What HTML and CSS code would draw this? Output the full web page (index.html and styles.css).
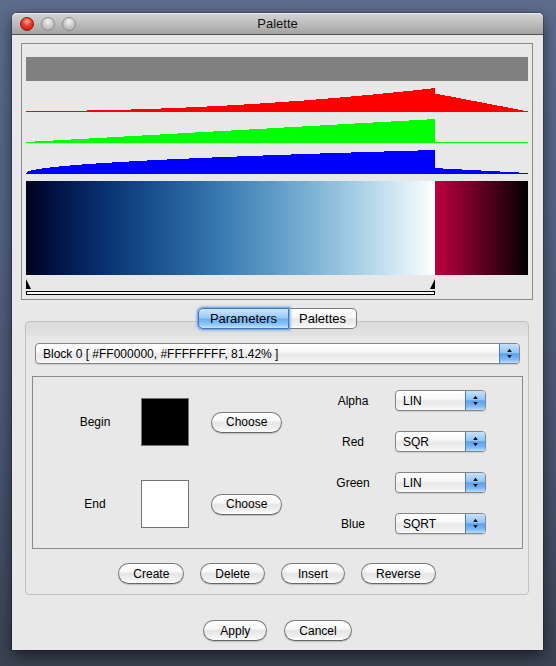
FILE: index.html
```html
<!DOCTYPE html>
<html lang="en">
<head>
<meta charset="utf-8">
<title>Palette</title>
<link rel="stylesheet" href="styles.css">
</head>
<body>
<div class="window">
  <div class="titlebar">
    <div class="lights">
      <span class="light light-close"></span>
      <span class="light"></span>
      <span class="light"></span>
    </div>
    <div class="title">Palette</div>
    <div></div>
  </div>
  <div class="content">
    <div class="preview">
      <div class="alpha-bar"></div>
      <svg class="hist" width="502" height="24" viewBox="0 0 502 24" shape-rendering="crispEdges"><path fill="#ff0000" d="M0 24 V23 H61 V22 H105 V21 H135 V20 H160 V19 H181 V18 H201 V17 H218 V16 H234 V15 H249 V14 H263 V13 H278 V12 H290 V11 H302 V10 H314 V9 H325 V8 H336 V7 H347 V6 H357 V5 H367 V4 H377 V3 H387 V2 H396 V1 H405 V0 H409 V6 H414 V7 H419 V8 H425 V9 H430 V10 H435 V11 H440 V12 H445 V13 H451 V14 H456 V15 H461 V16 H466 V17 H471 V18 H477 V19 H482 V20 H487 V21 H492 V22 H497 V23 H502 V24 Z"/></svg>
      <svg class="hist" width="502" height="24" viewBox="0 0 502 24" shape-rendering="crispEdges"><path fill="#00ff00" d="M0 24 V23 H9 V22 H27 V21 H45 V20 H63 V19 H81 V18 H98 V17 H116 V16 H134 V15 H152 V14 H169 V13 H187 V12 H205 V11 H223 V10 H241 V9 H258 V8 H276 V7 H294 V6 H312 V5 H329 V4 H347 V3 H365 V2 H383 V1 H401 V0 H409 V23 H502 V24 Z"/></svg>
      <svg class="hist" width="502" height="24" viewBox="0 0 502 24" shape-rendering="crispEdges"><path fill="#0000ff" d="M0 24 V23 H1 V22 H2 V21 H5 V20 H10 V19 H16 V18 H24 V17 H33 V16 H44 V15 H56 V14 H70 V13 H86 V12 H103 V11 H121 V10 H141 V9 H163 V8 H186 V7 H211 V6 H237 V5 H265 V4 H294 V3 H325 V2 H358 V1 H392 V0 H409 V18 H417 V19 H436 V20 H455 V21 H474 V22 H493 V23 H502 V24 Z"/></svg>
      <div class="gradient">
        <div class="grad-a"></div>
        <div class="grad-b"></div>
      </div>
      <div class="markers">
        <div class="tri-row">
          <svg width="5" height="10" viewBox="0 0 5 10"><polygon points="0,0 0,10 5,10" fill="#000"/></svg>
          <svg width="5" height="10" viewBox="0 0 5 10"><polygon points="5,0 5,10 0,10" fill="#000"/></svg>
        </div>
        <div class="range"></div>
      </div>
    </div>

    <div class="tabs">
      <button class="tab tab-active">Parameters</button>
      <button class="tab tab-last">Palettes</button>
    </div>

    <div class="pane">
      <div class="select select-wide">
        <span class="select-text">Block 0 [ #FF000000, #FFFFFFFF, 81.42% ]</span>
        <span class="stepper"><svg width="20" height="19" viewBox="0 0 20 19"><polygon points="7.5,8 12.5,8 10,4.5" fill="#111"/><polygon points="7.5,11 12.5,11 10,14.5" fill="#111"/></svg></span>
      </div>

      <div class="block-box">
        <div class="colors">
          <div class="lbl-left">Begin</div>
          <div class="swatch swatch-black"></div>
          <div><button class="btn">Choose</button></div>
          <div class="lbl-left">End</div>
          <div class="swatch swatch-white"></div>
          <div><button class="btn">Choose</button></div>
        </div>
        <div class="channels">
          <div class="lbl-right">Alpha</div>
          <div class="select select-small"><span class="select-text">LIN</span><span class="stepper"><svg width="20" height="19" viewBox="0 0 20 19"><polygon points="7.5,8 12.5,8 10,4.5" fill="#111"/><polygon points="7.5,11 12.5,11 10,14.5" fill="#111"/></svg></span></div>
          <div class="lbl-right">Red</div>
          <div class="select select-small"><span class="select-text">SQR</span><span class="stepper"><svg width="20" height="19" viewBox="0 0 20 19"><polygon points="7.5,8 12.5,8 10,4.5" fill="#111"/><polygon points="7.5,11 12.5,11 10,14.5" fill="#111"/></svg></span></div>
          <div class="lbl-right">Green</div>
          <div class="select select-small"><span class="select-text">LIN</span><span class="stepper"><svg width="20" height="19" viewBox="0 0 20 19"><polygon points="7.5,8 12.5,8 10,4.5" fill="#111"/><polygon points="7.5,11 12.5,11 10,14.5" fill="#111"/></svg></span></div>
          <div class="lbl-right">Blue</div>
          <div class="select select-small"><span class="select-text">SQRT</span><span class="stepper"><svg width="20" height="19" viewBox="0 0 20 19"><polygon points="7.5,8 12.5,8 10,4.5" fill="#111"/><polygon points="7.5,11 12.5,11 10,14.5" fill="#111"/></svg></span></div>
        </div>
      </div>

      <div class="btn-row">
        <button class="btn">Create</button>
        <button class="btn">Delete</button>
        <button class="btn">Insert</button>
        <button class="btn">Reverse</button>
      </div>
    </div>

    <div class="dialog-row">
      <button class="btn">Apply</button>
      <button class="btn">Cancel</button>
    </div>
  </div>
</div>
</body>
</html>
```

FILE: styles.css
```css
* { box-sizing: border-box; }

html, body {
  margin: 0;
  width: 556px;
  height: 666px;
  overflow: hidden;
}

body {
  padding: 13px 0 0 12px;
  background: linear-gradient(180deg, #5c6c8b 0%, #546282 35%, #485470 70%, #3b4352 100%);
  font-family: "Liberation Sans", Arial, sans-serif;
  color: #000;
}

.window {
  width: 531px;
  height: 637px;
  background: #e8e8e8;
  border-radius: 5px 5px 0 0;
  box-shadow: 0 6px 16px rgba(0, 0, 0, 0.55), 0 0 0 1px rgba(0, 0, 0, 0.2);
  display: flex;
  flex-direction: column;
}

.titlebar {
  height: 22px;
  flex: none;
  border-bottom: 1px solid #555;
  border-radius: 5px 5px 0 0;
  background: linear-gradient(180deg, #d4d4d4 0%, #bdbdbd 50%, #a3a3a3 100%);
  box-shadow: inset 0 1px 0 #ececec;
  display: grid;
  grid-template-columns: 1fr auto 1fr;
  align-items: center;
}

.lights {
  display: flex;
  gap: 7px;
  padding-left: 8px;
}

.light {
  width: 14px;
  height: 14px;
  border-radius: 50%;
  border: 1px solid #8b8b8b;
  background: radial-gradient(circle at 50% 30%, #f4f4f4 0%, #cdcdcd 45%, #a8a8a8 100%);
}

.light-close {
  border-color: #8c1d12;
  background: radial-gradient(circle at 50% 30%, #ffb8a8 0%, #f2402e 40%, #b40f02 100%);
}

.title {
  font-size: 13px;
  color: #111;
}

.content {
  flex: 1;
  padding-top: 8px;
  display: flex;
  flex-direction: column;
}

/* preview panel */
.preview {
  margin: 0 10px 0 9px;
  border: 1px solid #8a8a8a;
  padding: 13px 4px 4px;
}

.alpha-bar {
  height: 24px;
  background: #808080;
}

.hist {
  display: block;
  margin-top: 7px;
}

.gradient {
  display: flex;
  height: 94px;
  margin-top: 7px;
}

.grad-a {
  width: 409px;
  background: linear-gradient(to right,
    #00041c 0%, #010d39 5%, #031a51 10%, #0a3372 20%, #174d8c 30%,
    #2966a1 40%, #4080b4 50%, #5c99c6 60%, #7db3d5 70%, #a3cce4 80%,
    #cfe6f2 90%, #ffffff 100%);
}

.grad-b {
  flex: 1;
  background: linear-gradient(to right, #bd0040 0%, #000000 100%);
}

.markers {
  width: 409px;
  height: 20px;
  padding-top: 4px;
}

.tri-row {
  display: flex;
  justify-content: space-between;
  height: 10px;
}

.tri-row svg { display: block; }

.range {
  margin-top: 2px;
  height: 4px;
  border: 1px solid #000;
  background: #fff;
}

/* tabs */
.tabs {
  position: relative;
  z-index: 1;
  display: flex;
  justify-content: center;
  align-items: flex-start;
  height: 22px;
  margin-top: 7px;
  padding-top: 1px;
}

.tab {
  height: 21px;
  padding: 0;
  font-family: "Liberation Sans", Arial, sans-serif;
  font-size: 13px;
  color: #000;
  border: 1px solid #7a7a7a;
  background: linear-gradient(180deg, #ffffff 0%, #f6f6f6 45%, #e7e7e7 55%, #f2f2f2 85%, #ffffff 100%);
}

.tab-active {
  position: relative;
  z-index: 1;
  width: 91px;
  border-color: #4a76b2;
  border-radius: 5px 0 0 5px;
  background: linear-gradient(180deg, #cbe5fd 0%, #9ccbf7 45%, #6eb0f0 55%, #8bc4f6 80%, #c0e4ff 100%);
  box-shadow: 0 0 0 1px rgba(110, 165, 235, 0.8), 0 0 2px 2px rgba(110, 165, 235, 0.55);
}

.tab-last {
  width: 68px;
  border-left: none;
  border-radius: 0 5px 5px 0;
}

/* tab pane */
.pane {
  margin: -8px 14px 0 13px;
  height: 274px;
  border: 1px solid #c2c2c2;
  border-radius: 4px;
  padding-top: 21px;
  background: linear-gradient(180deg, #dcdcdc 0px, #e2e2e2 14px, #e8e8e8 15px);
}

.select {
  display: flex;
  align-items: center;
  height: 21px;
  border: 1px solid #858585;
  border-radius: 4px;
  background: linear-gradient(180deg, #ffffff 0%, #f7f7f7 40%, #e9e9e9 55%, #f1f1f1 85%, #fafafa 100%);
  box-shadow: 0 1px 1px rgba(0, 0, 0, 0.12);
  font-size: 12px;
  overflow: hidden;
}

.select-wide {
  margin: 0 8px 0 9px;
}

.select-small {
  width: 91px;
}

.select-text {
  flex: 1;
  padding-left: 7px;
  white-space: nowrap;
}

.stepper {
  flex: none;
  width: 20px;
  align-self: stretch;
  border-left: 1px solid #4f7ab4;
  background: linear-gradient(180deg, #c6e2fd 0%, #93c5f5 45%, #5aa0ec 52%, #7cb9f4 80%, #b8e0ff 100%);
  display: flex;
  align-items: center;
  justify-content: center;
}

.stepper svg { display: block; }

.block-box {
  margin: 12px 5px 0 6px;
  height: 173px;
  border: 1px solid #8a8a8a;
  display: flex;
}

.colors {
  display: grid;
  grid-template-columns: 108px 70px 71px;
  grid-template-rows: 82px 82px;
  align-items: center;
  padding-top: 4px;
}

.lbl-left {
  padding-left: 16px;
  text-align: center;
  font-size: 12px;
}

.swatch {
  width: 48px;
  height: 48px;
  border: 1px solid #737373;
}

.swatch-black { background: #000; }
.swatch-white { background: #fff; }

.channels {
  margin-left: 41px;
  display: grid;
  grid-template-columns: 72px 91px;
  grid-template-rows: repeat(4, 41px);
  align-items: center;
  padding-top: 3px;
}

.lbl-right {
  padding-right: 12px;
  text-align: center;
  font-size: 12px;
}

.btn {
  height: 21px;
  min-width: 64px;
  padding: 0 14px;
  border: 1px solid #7a7a7a;
  border-bottom-color: #666;
  border-radius: 11px;
  background: linear-gradient(180deg, #ffffff 0%, #f7f7f7 40%, #e5e5e5 52%, #efefef 80%, #ffffff 100%);
  box-shadow: 0 1px 1px rgba(0, 0, 0, 0.18);
  font-family: "Liberation Sans", Arial, sans-serif;
  font-size: 12px;
  color: #000;
}

.btn-row {
  display: flex;
  justify-content: center;
  gap: 16px;
  margin-top: 14px;
}

.dialog-row {
  display: flex;
  justify-content: center;
  gap: 17px;
  margin-top: 25px;
}
```
